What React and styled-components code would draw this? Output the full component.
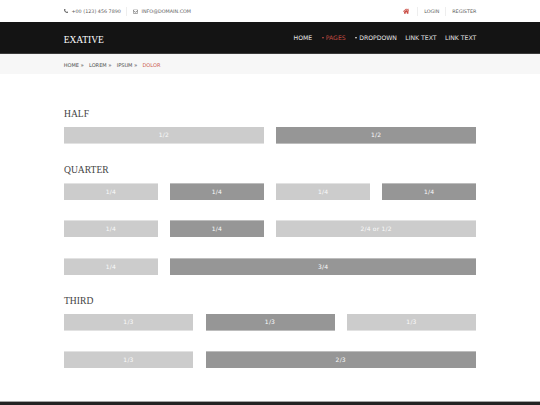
import React from "react";
import styled, { createGlobalStyle } from "styled-components";
import { FaPhoneAlt, FaHome, FaRegEnvelope } from "react-icons/fa";

function App() {
    return (
        <>
            <GlobalStyle />
            <TopBar>
                <Contacts>
                    <Contact $gap="3.8px">
                        <FaPhoneAlt size={4} />
                        <span>+00 (123) 456 7890</span>
                    </Contact>
                    <Contact $gap="3.6px">
                        <FaRegEnvelope size={5} />
                        <span>INFO@DOMAIN.COM</span>
                    </Contact>
                </Contacts>
                <Account>
                    <HomeLink href="#"><FaHome size={6.5} /></HomeLink>
                    <AccountLink href="#">LOGIN</AccountLink>
                    <AccountLink href="#">REGISTER</AccountLink>
                </Account>
            </TopBar>

            <Header>
                <Logo>EXATIVE</Logo>
                <Nav>
                    <NavLink href="#" $space="9.8px">HOME</NavLink>
                    <NavLink href="#" $space="9.8px" $active><Caret />PAGES</NavLink>
                    <NavLink href="#" $space="8.3px"><Caret />DROPDOWN</NavLink>
                    <NavLink href="#" $space="8.5px">LINK TEXT</NavLink>
                    <NavLink href="#" $space="0">LINK TEXT</NavLink>
                </Nav>
            </Header>

            <Breadcrumb>
                <Crumb>HOME <Arrow>»</Arrow></Crumb>
                <Crumb>LOREM <Arrow>»</Arrow></Crumb>
                <Crumb>IPSUM <Arrow>»</Arrow></Crumb>
                <Crumb $active>DOLOR</Crumb>
            </Breadcrumb>

            <Main>
                <Title>HALF</Title>
                <Row $cols={2} $space="19px">
                    <Cell $bottom>1/2</Cell>
                    <Cell $bottom $dark>1/2</Cell>
                </Row>

                <Title>QUARTER</Title>
                <Row $cols={4} $space="20px">
                    <Cell $top>1/4</Cell>
                    <Cell $top $dark>1/4</Cell>
                    <Cell $top>1/4</Cell>
                    <Cell $top $dark>1/4</Cell>
                </Row>
                <Row $cols={4} $space="21px">
                    <Cell $top>1/4</Cell>
                    <Cell $top $dark>1/4</Cell>
                    <Cell $top $span={2}>2/4 or 1/2</Cell>
                </Row>
                <Row $cols={4} $space="19px">
                    <Cell $top>1/4</Cell>
                    <Cell $top $dark $span={3}>3/4</Cell>
                </Row>

                <Title>THIRD</Title>
                <Row $cols={3} $space="20px">
                    <Cell $bottom>1/3</Cell>
                    <Cell $bottom $dark>1/3</Cell>
                    <Cell $bottom>1/3</Cell>
                </Row>
                <Row $cols={3} $space="0">
                    <Cell $top>1/3</Cell>
                    <Cell $top $dark $span={2}>2/3</Cell>
                </Row>
            </Main>

            <Footer />
        </>
    )
}

export default App

const GlobalStyle = createGlobalStyle`
    * {
        box-sizing: border-box;
    }

    body {
        margin: 0;
        background: #FFFFFF;
        font-family: "DejaVu Sans", Verdana, sans-serif;
        color: #5C5C5C;
        overflow: hidden;
    }

    #root {
        height: 405px;
        display: flex;
        flex-direction: column;
    }

    a {
        color: inherit;
        text-decoration: none;
    }
`

const Bar = styled.div`
    width: 100%;
    flex-shrink: 0;
    display: flex;
    justify-content: space-between;
    align-items: center;
    padding: 0 63.7px;
`

const TopBar = styled(Bar)`
    height: 22px;
    font-size: 4.85px;
    line-height: 9px;
`

const Contacts = styled.div`
    display: flex;
`

const Contact = styled.div`
    display: flex;
    align-items: center;
    gap: ${({ $gap }) => $gap};

    & + & {
        margin-left: 5.5px;
        padding-left: 5.5px;
        border-left: 1px solid #EEEEEE;
    }
`

const Account = styled.div`
    display: flex;
    align-items: center;
`

const HomeLink = styled.a`
    display: flex;
    margin-right: 8px;
    color: #C94A41;
`

const AccountLink = styled.a`
    padding-left: 5.8px;
    border-left: 1px solid #EEEEEE;

    & + & {
        margin-left: 6px;
    }
`

const Header = styled(Bar)`
    height: 32px;
    background: #141414;
    border-bottom: 1px solid #3A3A3A;
    color: #DDDDDD;
`

const Logo = styled.h1`
    margin: 5px 0 0;
    font-family: "Liberation Serif", Georgia, serif;
    font-weight: 400;
    font-size: 9.5px;
    line-height: 12px;
    color: #FFFFFF;
`

const Nav = styled.nav`
    display: flex;
    align-items: center;
    font-size: 6.15px;
    line-height: 10px;
    padding-top: 1px;
`

const NavLink = styled.a`
    display: flex;
    align-items: center;
    margin-right: ${({ $space }) => $space};
    color: ${({ $active }) => $active ? "#C24A41" : "#E6E6E6"};
`

const Caret = styled.span`
    margin-right: 1.7px;
    border: 1.5px solid transparent;
    border-width: 2px 1.5px 0;
    border-top-color: currentColor;
`

const Breadcrumb = styled(Bar)`
    height: 20px;
    justify-content: flex-start;
    gap: 5.1px;
    background: #F7F7F7;
    font-size: 5.05px;
    line-height: 10px;
    padding-top: 2px;
`

const Crumb = styled.span`
    color: ${({ $active }) => $active ? "#CC5A50" : "#505050"};
`

const Arrow = styled.span`
    font-size: 5.4px;
`

const Main = styled.main`
    flex: 1;
    padding: 34px 64px 0;
`

const Title = styled.h2`
    height: 12px;
    margin: 0 0 7px;
    font-family: "Liberation Serif", Georgia, serif;
    font-weight: 400;
    font-size: 9.6px;
    line-height: 12px;
    color: #444444;

    div + & {
        margin: 20px 0 7px;
    }
`

const Row = styled.div`
    display: grid;
    grid-template-columns: repeat(${({ $cols }) => $cols}, 1fr);
    column-gap: 12.5px;
    margin-bottom: ${({ $space }) => $space};
`

const Cell = styled.div`
    grid-column: span ${({ $span }) => $span || 1};
    height: 17px;
    background: ${({ $dark }) => $dark ? "#969696" : "#CCCCCC"};
    border: 0 solid ${({ $dark }) => $dark ? "#BDBDBD" : "#E2E2E2"};
    border-top-width: ${({ $top }) => $top ? "1px" : "0"};
    border-bottom-width: ${({ $bottom }) => $bottom ? "1px" : "0"};
    font-size: 6px;
    line-height: 16px;
    letter-spacing: 0.2px;
    text-align: center;
    color: #FAFAFA;
`

const Footer = styled.footer`
    height: 4px;
    flex-shrink: 0;
    background: #232323;
    border-top: 1px solid #A5A5A5;
`
